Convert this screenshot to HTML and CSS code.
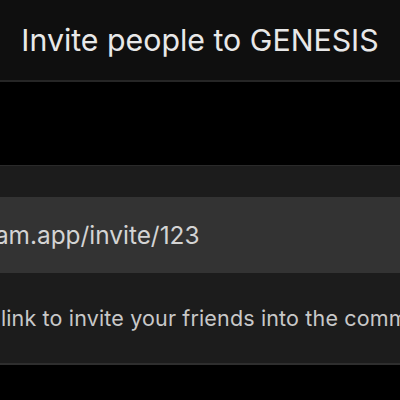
FILE: index.html
```html
<!DOCTYPE html>
<html lang="en">
<head>
    <meta charset="UTF-8">
    <meta name="viewport" content="width=device-width, initial-scale=1.0">
    <title>Invite people</title>
    <link rel="stylesheet" href="styles.css">
</head>
<body>
<header class="top-bar">
    <h1>Invite people to GENESIS</h1>
</header>
<section class="invite">
    <div class="invite-link">
        <span class="link-text">https://genesis.team.app/invite/123</span>
    </div>
    <p class="invite-hint">Share this link to invite your friends into the community.</p>
</section>
</body>
</html>
```

FILE: styles.css
```css
/* General Styles */
body {
    font-family: 'Inter', 'Liberation Sans', sans-serif;
    margin: 0;
    padding: 0;
    background-color: #000;
    color: #e6e6e6;
    overflow: hidden;
}

.top-bar {
    height: 80px;
    background-color: #0f0f0f;
    border-bottom: 2px solid #262626;
    display: flex;
    align-items: center;
    justify-content: center;
}

.top-bar h1 {
    margin: 0;
    font-size: 30.3px;
    font-weight: 400;
    color: #e8e8e8;
    white-space: nowrap;
}

.invite {
    margin-top: 83px;
    padding-top: 31px;
    background-color: #1c1c1c;
    border-top: 1px solid #2a2a2a;
    border-bottom: 2px solid #2e2e2e;
    overflow: hidden;
    white-space: nowrap;
}

.invite-link {
    height: 76px;
    background-color: #333;
    display: flex;
    align-items: center;
}

.link-text {
    margin-left: -206px;
    font-size: 24.4px;
    color: #d4d4d4;
}

.invite-hint {
    margin: 0;
    height: 90px;
    line-height: 90px;
    margin-left: -108px;
    font-size: 21.5px;
    letter-spacing: 0.15px;
    color: #c8c8c8;
}
```
